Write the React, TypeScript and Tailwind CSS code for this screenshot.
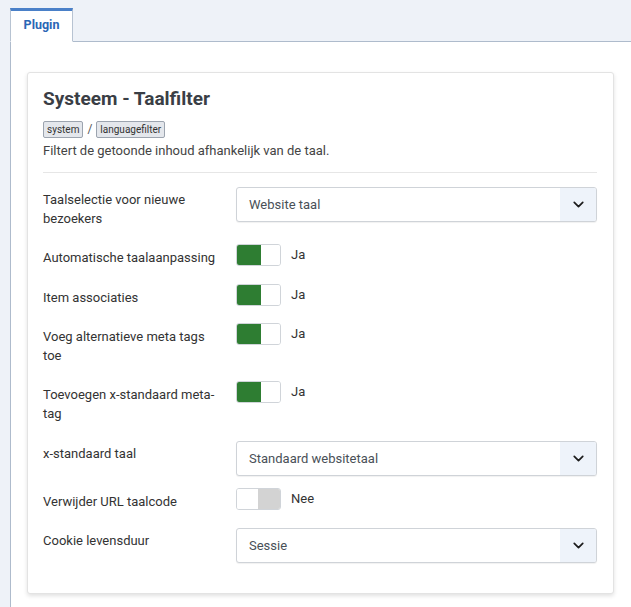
import {ChevronDown} from 'lucide-react';

type Row =
	| {kind: 'select'; label: string; value: string; mb: string}
	| {kind: 'toggle'; label: string; on: boolean; mb: string};

const rows: Row[] = [
	{kind: 'select', label: 'Taalselectie voor nieuwe bezoekers', value: 'Website taal', mb: 'mb-4'},
	{kind: 'toggle', label: 'Automatische taalaanpassing', on: true, mb: 'mb-[17px]'},
	{kind: 'toggle', label: 'Item associaties', on: true, mb: 'mb-4'},
	{kind: 'toggle', label: 'Voeg alternatieve meta tags toe', on: true, mb: 'mb-4'},
	{kind: 'toggle', label: 'Toevoegen x-standaard meta-tag', on: true, mb: 'mb-[18px]'},
	{kind: 'select', label: 'x-standaard taal', value: 'Standaard websitetaal', mb: 'mb-3'},
	{kind: 'toggle', label: 'Verwijder URL taalcode', on: false, mb: 'mb-[17px]'},
	{kind: 'select', label: 'Cookie levensduur', value: 'Sessie', mb: 'mb-[30px]'},
];

function Select({value}: {value: string}) {
	return (
		<div className="flex h-[35px] w-full overflow-hidden rounded-[3px] border border-[#cfd3d8] bg-white shadow-[0_1px_1px_rgba(0,0,0,0.06)]">
			<span className="flex flex-1 items-center pl-3 text-[13px] text-[#495057]">{value}</span>
			<span className="flex w-[36px] items-center justify-center bg-[#eef3fa]">
				<ChevronDown size={17} strokeWidth={2.4} className="text-[#1c1c1c]" />
			</span>
		</div>
	);
}

function Toggle({on}: {on: boolean}) {
	return (
		<div className="flex items-start gap-[10px]">
			<div className="flex h-[22px] w-[45px] overflow-hidden rounded-[3px] border border-[#d0d4d9] bg-white">
				<span className={on ? 'w-[24px] bg-[#2e7d32]' : 'w-[21px] bg-white'} />
				<span className={on ? 'flex-1 bg-white' : 'flex-1 bg-[#d3d3d3]'} />
			</div>
			<span className="pt-[1px] text-[13px] leading-[19px] text-[#333]">{on ? 'Ja' : 'Nee'}</span>
		</div>
	);
}

export default function App() {
	return (
		<div className="min-h-[607px] bg-[#eef2f8] pl-[10px] pt-2 font-['Roboto',sans-serif] text-[#333]">
			<div className="flex">
				<div className="relative z-10 -mb-px flex h-[34px] w-[63px] items-center justify-center border border-t-[3px] border-[#b7c3d2] border-t-[#4a80c8] border-b-white bg-white pb-[2px] text-[12.5px] font-bold text-[#2a66b5]">
					Plugin
				</div>
			</div>
			<div className="min-h-[566px] border-l border-t border-[#aebbcc] bg-white pl-4 pr-[17px] pt-[30px]">
				<div className="rounded-[3px] border border-[#e3e3e3] bg-white pl-[15px] pr-4 pt-[14px] shadow-[0_2px_4px_rgba(0,0,0,0.12)]">
					<h1 className="text-[19px] font-bold leading-[24px] text-[#3a3e45]">Systeem - Taalfilter</h1>
					<div className="mt-[9px] flex items-center gap-[4px] text-[10px] text-[#333]">
						<span className="rounded-[2px] border border-[#9ca4af] bg-[#e4e7ec] px-[3px] leading-[15px]">system</span>
						<span className="text-[12px] text-[#555]">/</span>
						<span className="rounded-[2px] border border-[#9ca4af] bg-[#e4e7ec] px-[3px] leading-[15px]">languagefilter</span>
					</div>
					<p className="mt-[3px] text-[13px] leading-[19px] text-[#444]">
						Filtert de getoonde inhoud afhankelijk van de taal.
					</p>
					<hr className="mb-[14px] mt-[12px] border-t border-[#e6e6e6]" />
					<div className="flex flex-col">
						{rows.map((r) => (
							<div key={r.label} className={`flex items-start ${r.mb}`}>
								<div
									className={`w-[193px] shrink-0 pr-4 text-[13px] leading-[19px] text-[#333] ${
										r.kind === 'select' ? 'pt-[3px]' : 'pt-1'
									}`}
								>
									{r.label}
								</div>
								<div className="flex-1">
									{r.kind === 'select' ? <Select value={r.value} /> : <Toggle on={r.on} />}
								</div>
							</div>
						))}
					</div>
				</div>
			</div>
		</div>
	);
}
